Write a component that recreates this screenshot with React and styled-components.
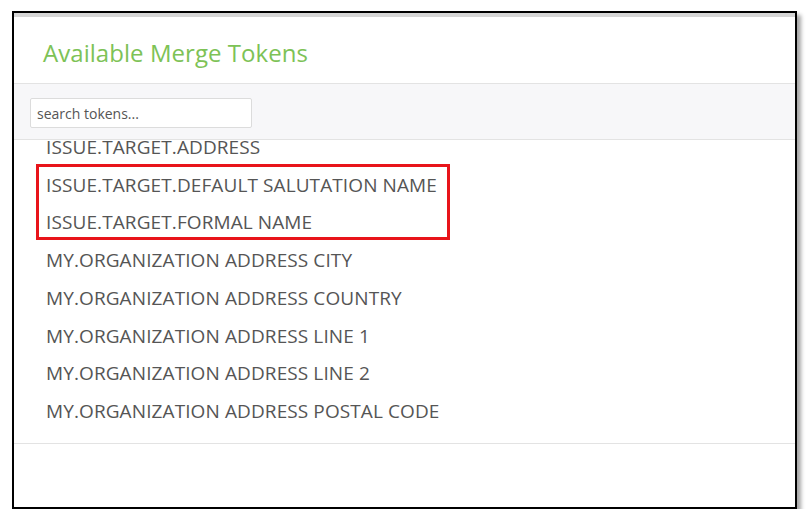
import React, { useLayoutEffect, useRef } from "react";
import styled, { createGlobalStyle } from "styled-components";

const tokens = [
  "ISSUE.TARGET.ADDRESS",
  "ISSUE.TARGET.DEFAULT SALUTATION NAME",
  "ISSUE.TARGET.FORMAL NAME",
  "MY.ORGANIZATION ADDRESS CITY",
  "MY.ORGANIZATION ADDRESS COUNTRY",
  "MY.ORGANIZATION ADDRESS LINE 1",
  "MY.ORGANIZATION ADDRESS LINE 2",
  "MY.ORGANIZATION ADDRESS POSTAL CODE",
  "MY.ORGANIZATION ADDRESS STATE",
  "MY.ORGANIZATION NAME",
];

const App = () => {
  const listRef = useRef(null);

  useLayoutEffect(() => {
    if (listRef.current) listRef.current.scrollTop = 11;
  }, []);

  return (
    <>
      <GlobalStyle />
      <Frame>
        <TopStrip />
        <Header>
          <Title>Available Merge Tokens</Title>
        </Header>
        <Toolbar>
          <Search placeholder="search tokens..." />
        </Toolbar>
        <ListArea>
          <ListViewport ref={listRef}>
            {tokens.map((t) => (
              <Token key={t}>{t}</Token>
            ))}
          </ListViewport>
          <Highlight />
        </ListArea>
        <Footer />
      </Frame>
    </>
  );
};

export default App;

const GlobalStyle = createGlobalStyle`
  body {
    margin: 0;
    background: #fff;
    font-family: "Open Sans", "Liberation Sans", sans-serif;
  }
`;

const Frame = styled.div`
  margin: 11px 0 0 12px;
  width: 785px;
  height: 498px;
  box-sizing: border-box;
  border: 2px solid #000;
  background: #fff;
  box-shadow: 4px 4px 4px rgba(0, 0, 0, 0.35);
  display: flex;
  flex-direction: column;
`;

const TopStrip = styled.div`
  height: 4px;
  background: #d6d6d6;
`;

const Header = styled.div`
  height: 67px;
  box-sizing: border-box;
  padding: 4px 0 0 29px;
  display: flex;
  align-items: center;
  border-bottom: 1px solid #e3e3e3;
`;

const Title = styled.h1`
  margin: 0;
  font-size: 24px;
  font-weight: 400;
  letter-spacing: 0.05px;
  color: #7dc256;
`;

const Toolbar = styled.div`
  height: 56px;
  box-sizing: border-box;
  padding: 14px 0 0 16px;
  background: #f7f7f9;
  border-bottom: 1px solid #e3e3e3;
`;

const Search = styled.input`
  width: 222px;
  height: 30px;
  box-sizing: border-box;
  padding: 0 6px;
  border: 1px solid #dcdcdc;
  border-radius: 2px;
  background: #fff;
  font-family: "Open Sans", "Liberation Sans", sans-serif;
  font-size: 14px;
  color: #555;
  outline: none;

  &::placeholder {
    color: #555;
  }
`;

const ListArea = styled.div`
  position: relative;
  height: 303px;
  border-bottom: 1px solid #e3e3e3;
`;

const ListViewport = styled.ul`
  height: 100%;
  margin: 0;
  padding: 0;
  list-style: none;
  overflow: hidden;
`;

const Token = styled.li`
  padding: 6px 0 6px 32px;
  font-size: 19px;
  line-height: 25.71px;
  letter-spacing: 0.1px;
  color: #555;
`;

const Highlight = styled.div`
  position: absolute;
  left: 22px;
  top: 24px;
  width: 414px;
  height: 76px;
  box-sizing: border-box;
  border: 3px solid #e8141a;
  pointer-events: none;
`;

const Footer = styled.div`
  flex: 1;
`;
